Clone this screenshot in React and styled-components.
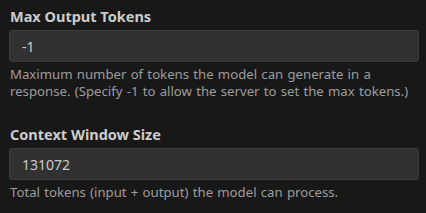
import styled, { createGlobalStyle } from 'styled-components';

const GlobalStyle = createGlobalStyle`
  body {
    margin: 0;
    background: #181818;
    font-family: "Segoe UI", "Noto Sans", "Open Sans", sans-serif;
  }
`;

const settings = [
  {
    title: 'Max Output Tokens',
    value: '-1',
    description:
      'Maximum number of tokens the model can generate in a response. (Specify -1 to allow the server to set the max tokens.)',
  },
  {
    title: 'Context Window Size',
    value: '131072',
    description: 'Total tokens (input + output) the model can process.',
  },
];

export default function App() {
  return (
    <>
      <GlobalStyle />
      <Panel>
        {settings.map(({ title, value, description }) => (
          <Setting key={title}>
            <Title>{title}</Title>
            <Input defaultValue={value} />
            <Description>{description}</Description>
          </Setting>
        ))}
      </Panel>
    </>
  );
}

const Panel = styled.div`
  width: 426px;
  height: 213px;
  padding: 0 7px 0 9px;
  box-sizing: border-box;
  overflow: hidden;
`;

const Setting = styled.div`
  display: flex;
  flex-direction: column;
  padding: 6px 0 18px;
`;

const Title = styled.div`
  color: #cccccc;
  font-weight: 700;
  font-size: 14.5px;
  line-height: 20px;
  padding-left: 1px;
`;

const Input = styled.input`
  margin-top: 4px;
  height: 32px;
  box-sizing: border-box;
  background: #313131;
  border: 1px solid #3c3c3c;
  border-radius: 3px;
  color: #cccccc;
  font-family: inherit;
  font-size: 14px;
  padding: 0 12px;
  outline: none;
`;

const Description = styled.div`
  margin-top: 4px;
  color: #9d9d9d;
  font-size: 13.2px;
  word-spacing: 0.8px;
  line-height: 17px;
  padding-left: 1px;
`;
